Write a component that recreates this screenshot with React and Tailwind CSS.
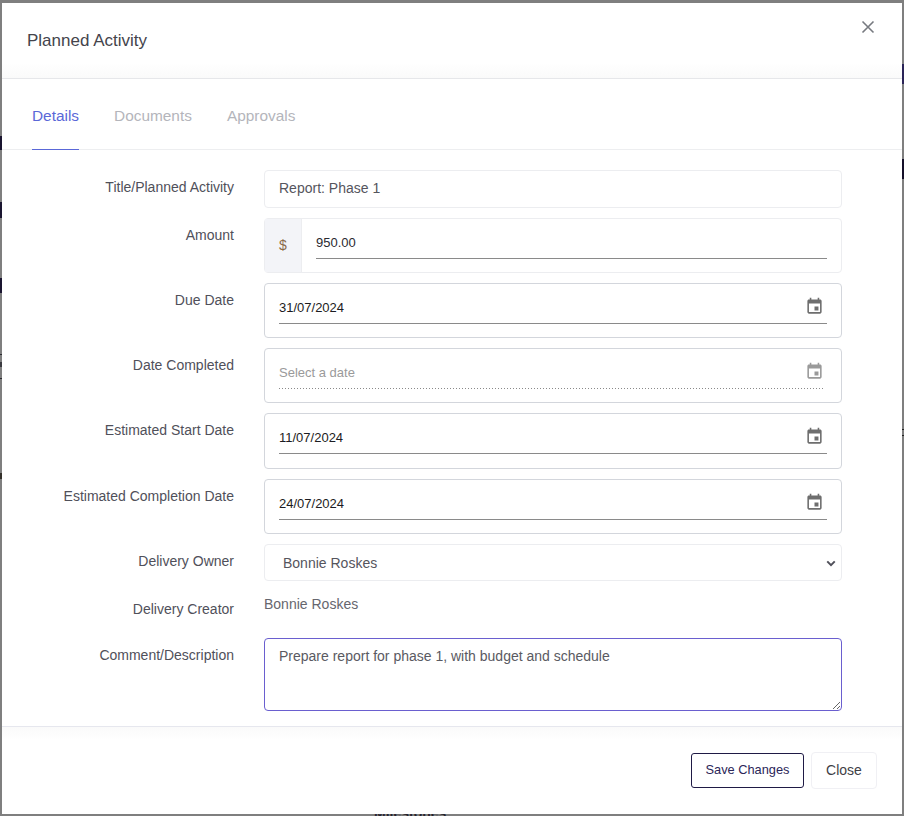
import React from 'react';

const font = 'font-["Liberation_Sans",Arial,sans-serif]';

const CalendarIcon = ({ muted }) => (
  <svg viewBox="0 0 24 24" className={`w-[19px] h-[19px] shrink-0 ${muted ? 'text-[#9a9a9a]' : 'text-[#6e6e6e]'}`} fill="currentColor">
    <path d="M17 12h-5v5h5v-5zM16 1v2H8V1H6v2H5c-1.11 0-1.99.9-1.99 2L3 19c0 1.1.89 2 2 2h14c1.1 0 2-.9 2-2V5c0-1.1-.9-2-2-2h-1V1h-2zm3 18H5V8h14v11z" />
    <path d="M5 5h14v3H5z" />
  </svg>
);

const Row = ({ label, labelClass = 'pt-2', className = '', children }) => (
  <div className={`flex ${className}`}>
    <label className={`w-[232px] shrink-0 text-right text-[14px] leading-[18px] text-[#50505a] ${labelClass}`}>{label}</label>
    <div className="ml-[30px] w-[578px]">{children}</div>
  </div>
);

const DateField = ({ value, placeholder, height = 'h-[55px]' }) => (
  <div className={`${height} rounded border border-[#d3d6dc] px-[14px] pt-[9px]`}>
    <div className={`flex h-[31px] items-center justify-between ${value ? 'border-b border-[#8a8a8a]' : ''}`}>
      <span className={value ? 'text-[13px] text-[#1c1c22]' : '-mt-[2px] text-[13px] text-[#9a9a9a]'}>{value || placeholder}</span>
      <span className="mr-[3px] -mt-[4px]"><CalendarIcon muted={!value} /></span>
    </div>
    {!value && <div className="mr-[2px] -mt-px h-px bg-[repeating-linear-gradient(90deg,#8a8a8a_0_1px,transparent_1px_3px)]" />}
  </div>
);

export default function App() {
  return (
    <div className={`relative h-[816px] w-[904px] overflow-hidden bg-[#7f7f7f] pl-[2px] pt-[3px] ${font}`}>
      {/* bits of the page behind the overlay, showing at the edges */}
      <div className="absolute left-0 top-[136px] h-[14px] w-[2px] bg-[#1a1530]" />
      <div className="absolute left-0 top-[202px] h-[16px] w-[2px] bg-[#1a1530]" />
      <div className="absolute left-0 top-[278px] h-[15px] w-[2px] bg-[#1a1530]" />
      <div className="absolute left-0 top-[354px] h-px w-[2px] bg-[#2a2a30]" />
      <div className="absolute left-0 top-[362px] h-[5px] w-[2px] bg-[#3a3a40]" />
      <div className="absolute left-0 top-[378px] h-px w-[2px] bg-[#2a2a30]" />
      <div className="absolute left-0 top-[473px] h-[6px] w-[2px] bg-[#33302a]" />
      <div className="absolute right-0 top-[64px] h-[20px] w-[2px] bg-[#2a2458]" />
      <div className="absolute right-0 top-[159px] h-[20px] w-[2px] bg-[#15102a]" />
      <div className="absolute right-0 top-[429px] h-px w-[2px] bg-[#222]" />
      <div className="absolute right-0 top-[435px] h-px w-[2px] bg-[#222]" />
      <div className="absolute left-[374px] top-[804px] text-[14px] font-bold leading-[18px] text-[#26242e]">Milestones</div>

      <div className="relative flex h-[811px] w-[900px] flex-col rounded-[5px] bg-white">
        <div className="relative h-[76px] shrink-0 border-b border-[#e6e7ea] bg-gradient-to-b from-white from-80% to-[#fafafa] pl-[25px] pt-[28px]">
          <h1 className="text-[17px] leading-5 text-[#44444c]">Planned Activity</h1>
          <button className="absolute right-[27px] top-[17px] text-[#777a80]">
            <svg viewBox="0 0 14 14" className="h-[14px] w-[14px]" fill="none" stroke="currentColor" strokeWidth="1.6">
              <path d="M1.5 1.5l11 11M12.5 1.5l-11 11" />
            </svg>
          </button>
        </div>
        <div className="flex h-[71px] shrink-0 gap-[35px] border-b border-[#edeef0] pl-[30px] text-[15.4px]">
          <div className="-mb-px border-b border-[#5a68d8] pt-[25px] text-[#5a68d8]">Details</div>
          <div className="pt-[25px] text-[#b4b5bb]">Documents</div>
          <div className="pt-[25px] text-[#b4b5bb]">Approvals</div>
        </div>
        <div className="flex flex-col gap-[10px] pt-[20px]">
          <Row label="Title/Planned Activity" labelClass="pt-[8px]">
            <div className="flex h-[38px] items-center rounded border border-[#ecedf0] px-[14px] pb-[2px] text-[14px] text-[#55555d]">Report: Phase 1</div>
          </Row>
          <Row label="Amount" labelClass="pt-[8px]">
            <div className="flex h-[55px] rounded border border-[#ecedf0]">
              <div className="flex w-[37px] items-center justify-center border-r border-[#ecedf0] bg-[#f3f4f8] text-[14px] text-[#8a6a4a]">$</div>
              <div className="flex-1 px-[14px] pt-[9px]">
                <div className="flex h-[31px] items-center border-b border-[#8a8a8a] text-[13px] text-[#2a2a30]">950.00</div>
              </div>
            </div>
          </Row>
          <Row label="Due Date"><DateField value="31/07/2024" /></Row>
          <Row label="Date Completed"><DateField placeholder="Select a date" /></Row>
          <Row label="Estimated Start Date"><DateField value="11/07/2024" height="h-[56px]" /></Row>
          <Row label="Estimated Completion Date"><DateField value="24/07/2024" /></Row>
          <Row label="Delivery Owner">
            <div className="flex h-[37px] items-center justify-between rounded border border-[#ecedf0] pl-[18px] pr-[5px] text-[14px] text-[#55555d]">
              <span className="mt-[2px]">Bonnie Roskes</span>
              <svg viewBox="0 0 12 12" className="h-[10px] w-[10px] text-[#50505a]" fill="none" stroke="currentColor" strokeWidth="2.4">
                <path d="M1.5 4l4.5 4.5L10.5 4" />
              </svg>
            </div>
          </Row>
          <Row label="Delivery Creator" labelClass="pt-[9px]" className="h-[47px]">
            <div className="pt-[4px] text-[14px] leading-[18px] text-[#66666e]">Bonnie Roskes</div>
          </Row>
          <Row label="Comment/Description" labelClass="pt-[8px]" className="-mt-[10px]">
            <textarea
              readOnly
              defaultValue="Prepare report for phase 1, with budget and schedule"
              className="block h-[73px] w-full rounded border border-[#6a5fcf] px-[14px] py-[8px] text-[14px] leading-[18px] text-[#5a5a62] outline-none"
            />
          </Row>
        </div>
        <div className="mt-[15px] flex flex-1 items-start justify-end gap-[7px] border-t border-[#e6e7ee] bg-gradient-to-b from-[#fafafa] to-white to-15% pr-[25px] pt-[26px]">
          <button className="h-[35px] w-[113px] rounded-[3px] border border-[#1f1a45] pb-[2px] text-[12.8px] text-[#2b2658]">Save Changes</button>
          <button className="h-[37px] w-[66px] -translate-y-px rounded border border-[#f0f0f4] text-[14px] text-[#3f3f46]">Close</button>
        </div>
      </div>
    </div>
  );
}
